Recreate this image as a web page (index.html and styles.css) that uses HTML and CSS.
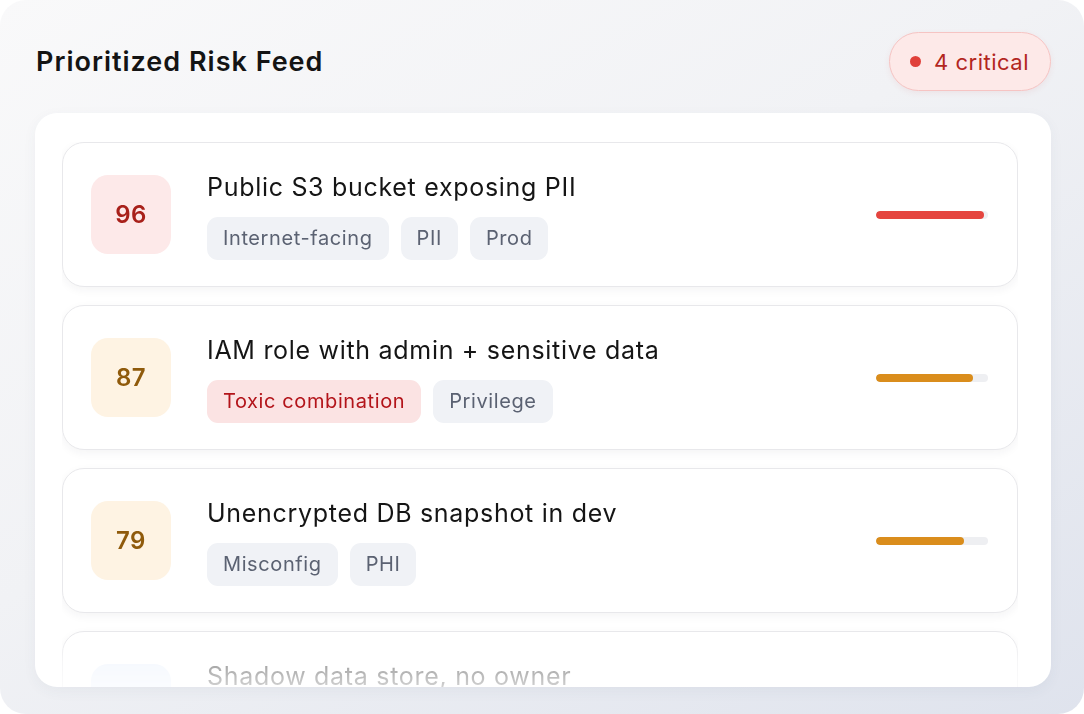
FILE: index.html
```html
<html>
  <head>
    <link rel="stylesheet" href="styles.css">
  </head>
  <body>
    <div class="feed_card">
      <div class="feed_head">
        <div class="feed_title">Prioritized Risk Feed</div>
        <div class="crit_badge"><span class="crit_dot"></span>4 critical</div>
      </div>
      <div class="feed_panel">
        <div class="feed_list">

          <div class="risk_row">
            <div class="score red">96</div>
            <div class="risk_body">
              <div class="risk_name">Public S3 bucket exposing PII</div>
              <div class="tags">
                <span class="tag">Internet-facing</span>
                <span class="tag">PII</span>
                <span class="tag">Prod</span>
              </div>
            </div>
            <div class="bar"><div class="fill red" style="width:96%"></div></div>
          </div>

          <div class="risk_row">
            <div class="score amber">87</div>
            <div class="risk_body">
              <div class="risk_name">IAM role with admin + sensitive data</div>
              <div class="tags">
                <span class="tag toxic">Toxic combination</span>
                <span class="tag">Privilege</span>
              </div>
            </div>
            <div class="bar"><div class="fill amber" style="width:87%"></div></div>
          </div>

          <div class="risk_row">
            <div class="score amber">79</div>
            <div class="risk_body">
              <div class="risk_name">Unencrypted DB snapshot in dev</div>
              <div class="tags">
                <span class="tag">Misconfig</span>
                <span class="tag">PHI</span>
              </div>
            </div>
            <div class="bar"><div class="fill amber" style="width:79%"></div></div>
          </div>

          <div class="risk_row">
            <div class="score blue">64</div>
            <div class="risk_body">
              <div class="risk_name">Shadow data store, no owner</div>
              <div class="tags">
                <span class="tag">Unmanaged</span>
              </div>
            </div>
            <div class="bar"><div class="fill blue" style="width:64%"></div></div>
          </div>

        </div>
      </div>
    </div>
  </body>
</html>
```

FILE: styles.css
```css
html, body {
  margin: 0;
  background: #ffffff;
  font-family: Inter, "Noto Sans", sans-serif;
}

.feed_card {
  width: 1084px;
  height: 714px;
  box-sizing: border-box;
  border-radius: 26px;
  overflow: hidden;
  background: linear-gradient(150deg, #f9f9fa 0%, #f1f2f5 45%, #dfe3ed 100%);
  padding: 32px 33px 0 35px;
}

.feed_head {
  display: flex;
  align-items: center;
  justify-content: space-between;
  height: 59px;
  padding-left: 1px;
}

.feed_title {
  font-size: 27px;
  font-weight: 600;
  color: #141414;
  letter-spacing: 1px;
}

.crit_badge {
  display: flex;
  align-items: center;
  gap: 13px;
  box-sizing: border-box;
  height: 59px;
  padding: 0 21px 0 20px;
  border-radius: 30px;
  background: #fde9e8;
  border: 1.5px solid #f6c4c3;
  color: #b3261e;
  font-size: 22px;
  letter-spacing: 0.5px;
  box-shadow: 0 2px 6px rgba(200, 60, 60, 0.08);
}

.crit_dot {
  width: 11px;
  height: 11px;
  border-radius: 50%;
  background: #e0403a;
}

.feed_panel {
  margin-top: 22px;
  height: 574px;
  background: #ffffff;
  border-radius: 22px;
  overflow: hidden;
  padding: 29px 33px 0 27px;
  box-sizing: border-box;
  box-shadow: 0 4px 14px rgba(60, 70, 100, 0.05);
}

.feed_list {
  display: flex;
  flex-direction: column;
  gap: 18px;
  height: 100%;
  -webkit-mask-image: linear-gradient(to bottom, #000 0, #000 496px, rgba(0,0,0,0.4) 520px, rgba(0,0,0,0.2) 100%);
  mask-image: linear-gradient(to bottom, #000 0, #000 496px, rgba(0,0,0,0.4) 520px, rgba(0,0,0,0.2) 100%);
}

.risk_row {
  flex: none;
  display: flex;
  align-items: center;
  height: 145px;
  box-sizing: border-box;
  padding: 0 29px 0 28px;
  border: 1.5px solid #e8e8eb;
  border-radius: 22px;
  background: #ffffff;
  box-shadow: 0 3px 10px rgba(30, 40, 60, 0.05);
}

.score {
  flex: none;
  width: 80px;
  height: 79px;
  border-radius: 17px;
  display: flex;
  align-items: center;
  justify-content: center;
  font-size: 24px;
  font-weight: 600;
  letter-spacing: 0.5px;
}

.score.red {
  background: #fde9e9;
  color: #a8201a;
}

.score.amber {
  background: #fef3e3;
  color: #8f5a0b;
}

.score.blue {
  background: #e8f0fd;
  color: #2a5bb8;
}

.risk_body {
  flex: 1;
  margin-left: 36px;
  margin-top: 2px;
}

.risk_name {
  font-size: 25px;
  color: #151515;
  letter-spacing: 0.7px;
  line-height: 30px;
}

.tags {
  display: flex;
  gap: 12px;
  margin-top: 15px;
}

.tag {
  height: 43px;
  box-sizing: border-box;
  padding: 0 16px;
  display: flex;
  align-items: center;
  border-radius: 11px;
  background: #f0f2f6;
  color: #5b6272;
  font-size: 20px;
  letter-spacing: 0.6px;
}

.tag.toxic {
  background: #fbe3e3;
  color: #b3141a;
}

.bar {
  flex: none;
  width: 112px;
  height: 8px;
  border-radius: 4px;
  background: #eeeff2;
  overflow: hidden;
}

.fill {
  height: 100%;
  border-radius: 4px;
}

.fill.red {
  background: #e5453f;
}

.fill.amber {
  background: #da8d1c;
}

.fill.blue {
  background: #4a7fe0;
}
```
